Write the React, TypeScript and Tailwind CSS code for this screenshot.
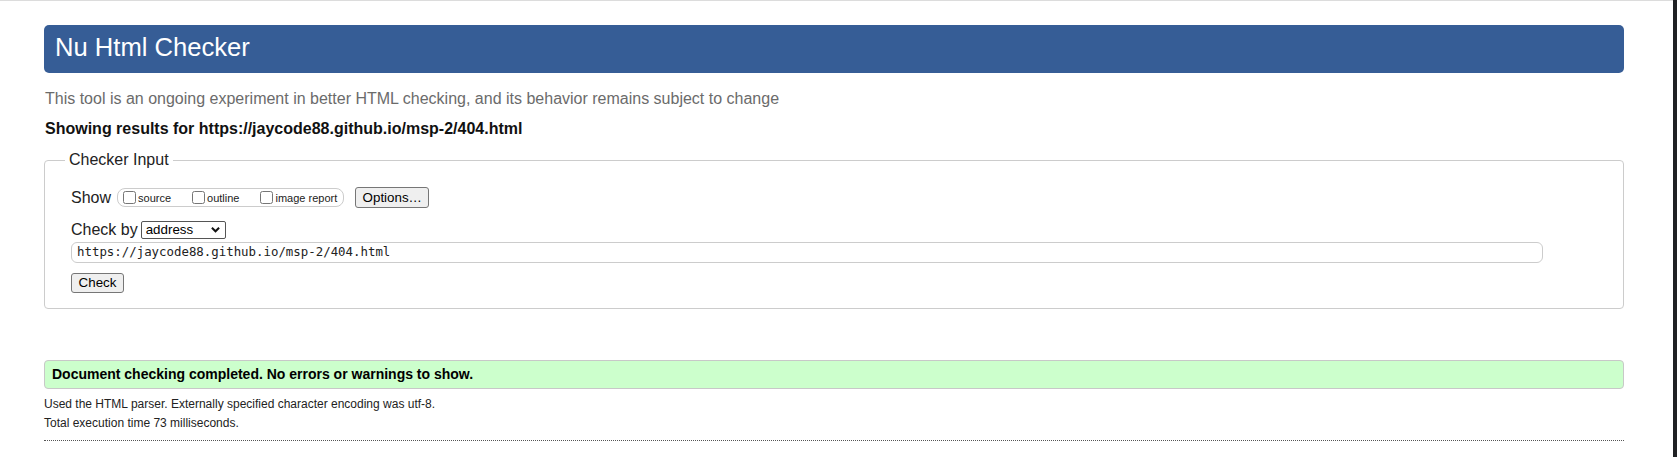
const showOptions = ['source', 'outline', 'image report']

function NativeButton({ label, className }: { label: string; className: string }) {
  return (
    <button
      className={`flex items-center justify-center rounded-[3px] border border-[#767676] bg-[#efefef] text-[13.33px] text-black ${className}`}
    >
      {label}
    </button>
  )
}

export default function App() {
  return (
    <div className="flex h-[457px] w-[1677px] overflow-hidden bg-white font-['Liberation_Sans',Arial,sans-serif] text-[#222]">
      <main className="flex-1 border-t border-[#dcdcdc] pl-[44px] pr-[49px] pt-[24px]">
        <header className="h-[48px] rounded-[5px] bg-[#365d96] pl-[11px] pt-[8px]">
          <h1 className="text-[25.6px] leading-[28px] text-white">Nu Html Checker</h1>
        </header>

        <p className="mt-[17px] pl-[1px] text-[16px] leading-[18px] text-[#6b6b6b]">
          This tool is an ongoing experiment in better HTML checking, and its behavior remains subject to change
        </p>
        <p className="mt-[12px] pl-[1px] text-[16px] font-bold leading-[18px] text-[#111]">
          Showing results for https://jaycode88.github.io/msp-2/404.html
        </p>

        <fieldset className="mt-[10px] rounded-[4px] border border-[#ccc]">
          <legend className="ml-[20px] px-[4px] text-[16px] text-[#222]">Checker Input</legend>
          <div className="pb-[15px] pl-[26px] pt-[15px]">
            {/* show row */}
            <div className="flex h-[21px] items-center">
              <span className="text-[16px]">Show</span>
              <div className="ml-[6px] flex h-[19px] items-center rounded-[8px] border border-[#ccc] pl-[5px] pr-[6px]">
                {showOptions.map((opt, i) => (
                  <label
                    key={opt}
                    className={`flex items-center ${i < showOptions.length - 1 ? 'mr-[21px]' : ''}`}
                  >
                    <input type="checkbox" className="m-0 h-[13px] w-[13px]" />
                    <span className="ml-[2px] mt-[2px] text-[11px] leading-[13px]">{opt}</span>
                  </label>
                ))}
              </div>
              <NativeButton label="Options…" className="ml-[11px] h-[21px] w-[74px]" />
            </div>

            {/* check by row */}
            <div className="mt-[12px] flex h-[19px] items-center">
              <span className="text-[16px]">Check by</span>
              <div className="ml-[3px] flex h-[18px] w-[85px] items-center rounded-[2px] border border-[#555] pl-[4px] pr-[5px] text-[13.33px] text-black">
                <span>address</span>
                <svg viewBox="0 0 10 7" className="ml-auto h-[7px] w-[9px]">
                  <polyline points="1,1.5 5,5.5 9,1.5" fill="none" stroke="#111" strokeWidth="2.2" />
                </svg>
              </div>
            </div>

            <div className="mt-[3px] flex h-[21px] w-[1472px] items-center rounded-[6px] border border-[#ccc] pl-[5px] font-['DejaVu_Sans_Mono',monospace] text-[12.4px] text-[#222]">
              https://jaycode88.github.io/msp-2/404.html
            </div>

            <NativeButton label="Check" className="mt-[10px] h-[20px] w-[53px]" />
          </div>
        </fieldset>

        <div className="mt-[51px] flex h-[29px] items-center rounded-[4px] border border-[#c8c8c8] bg-[#ccffcc] pl-[7px] text-[14px] font-bold text-black">
          Document checking completed. No errors or warnings to show.
        </div>
        <p className="mt-[8px] text-[12px] leading-[14px]">
          Used the HTML parser. Externally specified character encoding was utf-8.
        </p>
        <p className="mt-[5px] text-[12px] leading-[14px]">Total execution time 73 milliseconds.</p>
        <div className="mt-[10px] border-t border-dotted border-[#555]" />
      </main>
      <div className="w-[4px] shrink-0 bg-[#202124]" />
    </div>
  )
}
